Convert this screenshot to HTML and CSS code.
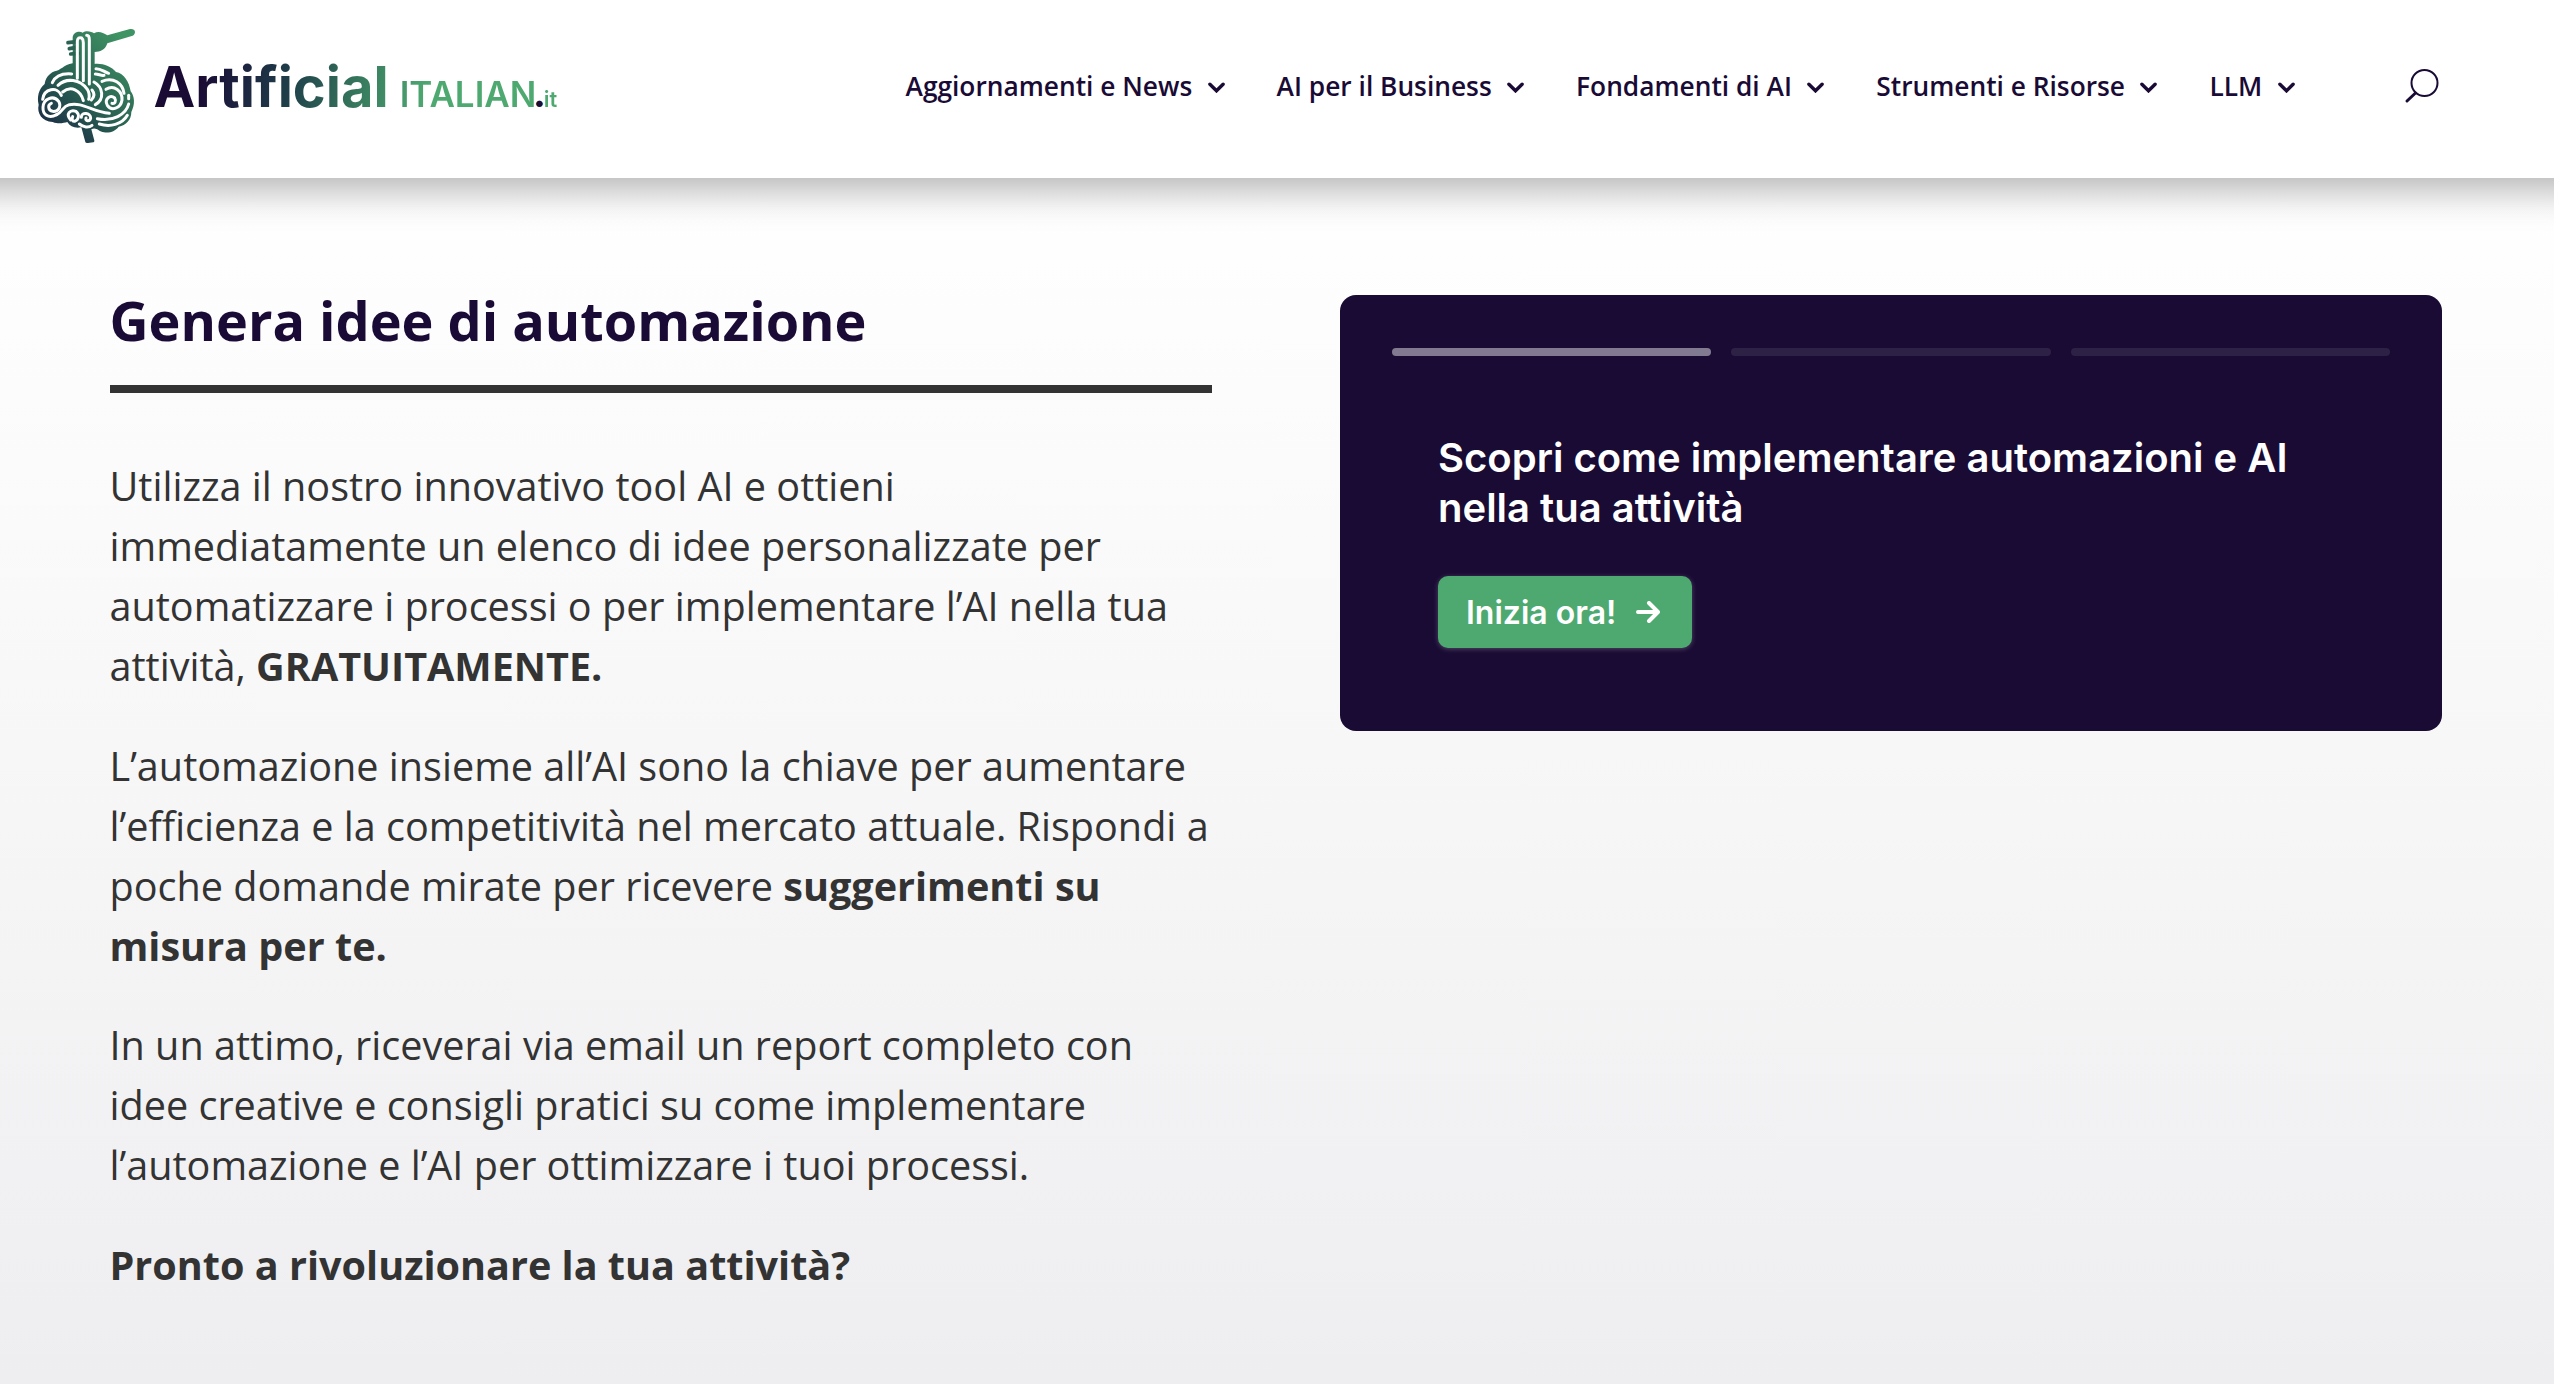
FILE: index.html
```
<!DOCTYPE html>
<html lang="it">

<head>
    <meta charset="utf-8">
    <title>Artificial Italian</title>
    <link rel="stylesheet" href="styles.css">
</head>

<body>
    <header class="header">
        <a class="logo">
            <svg class="logo-icon" viewBox="0 0 420 450">
                <defs>
                    <linearGradient id="brand" gradientUnits="userSpaceOnUse" x1="80" y1="350" x2="320" y2="90">
                        <stop offset="0" stop-color="#1b2f46" />
                        <stop offset="0.45" stop-color="#2a6353" />
                        <stop offset="1" stop-color="#3f9464" />
                    </linearGradient>
                </defs>
                <!-- brain, stem, fork -->
                <g fill="url(#brand)">
                    <path d="M158 160C130 165 122 182 104 184C84 192 76 208 74 222C56 236 50 262 56 284C50 310 66 334 98 336C118 344 132 338 142 336C150 350 166 356 184 352L196 396Q197 400 204 399L220 397Q225 396 222 388L214 358C230 350 236 366 252 367C270 370 288 362 296 350C318 346 334 330 334 306C346 284 344 258 332 244C328 216 312 190 288 186C274 168 244 158 222 162L158 160Z" />
                    <path d="M158 210L158 82C160 66 178 62 188 68C200 60 216 66 222 70C236 62 248 68 262 76L330 57C346 54 350 70 338 77L262 100C256 120 240 126 224 126L224 230L158 215Z" />
                </g>
                <g class="prongs">
                    <path d="M144 98L170 95M148 116L170 112M152 132L175 130" />
                </g>
                <!-- strands -->
                <g class="strands">
                    <path d="M172 205L172 92Q174 80 185 84Q190 88 190 98L190 212" />
                    <path d="M200 76Q208 76 208 90L208 222" />
                    <path d="M97 218C108 194 130 190 155 192" />
                    <path d="M114 226C140 202 180 208 202 238C208 248 210 256 206 268" />
                    <path d="M128 246C152 226 182 240 190 272" />
                    <path d="M68 268C72 236 112 228 124 256" />
                    <path d="M110 314C84 328 68 312 69 292C70 266 100 254 116 274C126 292 112 306 98 304C84 302 82 284 94 280" />
                    <path d="M110 314C130 304 126 290 148 284C190 276 216 306 268 310" />
                    <path d="M152 330C136 312 150 298 168 304C180 314 176 330 164 334C158 334 154 330 158 320" />
                    <path d="M184 322C184 304 212 308 212 324C210 336 194 334 198 324" />
                    <path d="M178 342C190 352 206 354 216 346" />
                    <path d="M222 216C250 232 254 268 226 284" />
                    <path d="M216 240C226 252 222 262 214 270" />
                    <path d="M228 176C244 176 252 186 266 190M226 192C236 192 244 198 252 196" />
                    <path d="M246 214C280 200 308 220 312 250" />
                    <path d="M258 238C282 222 308 244 306 270C302 296 274 304 262 286C252 268 270 252 284 264C290 274 284 282 276 280" />
                    <path d="M326 256L326 266" />
                    <path d="M326 282C318 314 278 336 232 326" />
                    <path d="M238 342C270 352 306 344 322 316" />
                </g>
            </svg>
            <span class="logo-text"><span class="logo-main">Artificial</span><span class="logo-sub">ITALIAN</span><span class="logo-dot">.</span><span class="logo-it">it</span></span>
        </a>
        <nav class="menu">
            <a>Aggiornamenti e News <svg class="chevron" viewBox="0 0 18 11"><path d="M2 2L9 9L16 2" /></svg></a>
            <a>AI per il Business <svg class="chevron" viewBox="0 0 18 11"><path d="M2 2L9 9L16 2" /></svg></a>
            <a>Fondamenti di AI <svg class="chevron" viewBox="0 0 18 11"><path d="M2 2L9 9L16 2" /></svg></a>
            <a>Strumenti e Risorse <svg class="chevron" viewBox="0 0 18 11"><path d="M2 2L9 9L16 2" /></svg></a>
            <a>LLM <svg class="chevron" viewBox="0 0 18 11"><path d="M2 2L9 9L16 2" /></svg></a>
        </nav>
        <svg class="search" viewBox="0 0 36 36">
            <circle cx="20.5" cy="15" r="13" />
            <path class="handle" d="M11.5 25L3 33" />
        </svg>
    </header>

    <main class="content">
        <section class="intro">
            <h1>Genera idee di automazione</h1>
            <hr>
            <p>Utilizza il nostro innovativo tool AI e ottieni immediatamente un elenco di idee personalizzate per automatizzare i processi o per implementare l’AI nella tua attività, <strong>GRATUITAMENTE.</strong></p>
            <p>L’automazione insieme all’AI sono la chiave per aumentare l’efficienza e la competitività nel mercato attuale. Rispondi a poche domande mirate per ricevere <strong>suggerimenti su misura per te.</strong></p>
            <p>In un attimo, riceverai via email un report completo con idee creative e consigli pratici su come implementare l’automazione e l’AI per ottimizzare i tuoi processi.</p>
            <p><strong>Pronto a rivoluzionare la tua attività?</strong></p>
        </section>
        <section class="card">
            <div class="steps">
                <span class="step active"></span>
                <span class="step"></span>
                <span class="step"></span>
            </div>
            <h2>Scopri come implementare automazioni e AI nella tua attività</h2>
            <button class="btn-start">Inizia ora!
                <svg class="arrow" viewBox="0 0 24 22"><path d="M2 11H21M13 2L22 11L13 20" /></svg>
            </button>
        </section>
    </main>
</body>

</html>
```
FILE: styles.css
```
* {
    box-sizing: border-box;
}

body {
    margin: 0;
    height: 1384px;
    overflow: hidden;
    font-family: "Open Sans", sans-serif;
    color: #333;
    background: linear-gradient(180deg, #fff 178px, #eeeef0 100%);
}

/* wider than the page so the shadow reaches both edges */
.header {
    position: relative;
    display: flex;
    height: 178px;
    margin: 0 -60px;
    padding-left: 80px;
    background-color: #fff;
    box-shadow: 0 24px 36px -12px rgba(0, 0, 0, 0.3);
}

.logo {
    display: flex;
    width: 885.5px;
}

.logo-icon {
    width: 140px;
    height: 150px;
    margin-top: 10px;
}

.prongs path {
    fill: none;
    stroke: #2a6353;
    stroke-width: 11;
    stroke-linecap: round;
}

.strands path {
    fill: none;
    stroke: #fff;
    stroke-width: 9;
    stroke-linecap: round;
}

.logo-text {
    height: 60px;
    margin: 57px 0 0 -6.5px;
    font-family: Inter, sans-serif;
    line-height: 60px;
    white-space: nowrap;
    color: transparent;
    background: linear-gradient(100deg, #1a0b35 12%, #1f3f4a 34%, #3a8060 53%, #4ea971 68%);
    -webkit-background-clip: text;
    background-clip: text;
}

.logo-main {
    font-size: 56px;
    font-weight: 700;
}

.logo-sub {
    margin-left: 11px;
    font-size: 35px;
    font-weight: 600;
}

.logo-dot {
    margin: 0 -1px 0 -3px;
    font-size: 35px;
    font-weight: 800;
    color: #190b35;
}

.logo-it {
    margin-left: -1px;
    font-size: 22px;
    font-weight: 600;
}

.menu {
    display: flex;
    gap: 52px;
    margin-top: 67px;
}

.menu a {
    display: flex;
    align-items: center;
    height: 38px;
    font-size: 26.3px;
    font-weight: 600;
    color: #190b35;
    white-space: nowrap;
}

.chevron {
    width: 17px;
    height: 11px;
    margin: 2px 0 0 15.4px;
}

.chevron path {
    fill: none;
    stroke: #190b35;
    stroke-width: 3.6;
    stroke-linecap: round;
}

.search {
    width: 36px;
    height: 36px;
    margin: 68px 0 0 109px;
    fill: none;
    stroke: #190b35;
    stroke-width: 2;
}

.search .handle {
    stroke-width: 3;
    stroke-linecap: round;
}

.content {
    display: grid;
    grid-template-columns: 1102px 1102px;
    gap: 128.5px;
    align-items: start;
    padding: 117px 0 0 109.5px;
}

h1 {
    margin: -2px 0 0;
    font-size: 54px;
    font-weight: 700;
    line-height: 54px;
    color: #190b35;
}

hr {
    height: 8px;
    margin: 38px 0 63px;
    border: 0;
    background-color: #333;
}

p {
    margin: 0 0 39.6px;
    font-size: 39.6px;
    line-height: 60px;
}

.card {
    height: 436px;
    padding: 53px 52px;
    border-radius: 16px;
    background-color: #190b33;
}

.steps {
    display: flex;
    gap: 20px;
}

.step {
    flex: 1;
    height: 8px;
    border-radius: 4px;
    background-color: rgba(255, 255, 255, 0.09);
}

.step.active {
    background-color: rgba(255, 255, 255, 0.46);
}

h2 {
    margin: 77px 46px 43px;
    font-family: Inter, sans-serif;
    font-size: 40px;
    font-weight: 600;
    line-height: 50px;
    color: #fff;
}

.btn-start {
    display: flex;
    align-items: center;
    height: 72px;
    margin-left: 46px;
    padding: 0 32px 0 28px;
    border: 0;
    border-radius: 10px;
    font-family: Inter, sans-serif;
    font-size: 32px;
    font-weight: 600;
    color: #fff;
    background-color: #4ea971;
    box-shadow: 0 1px 5px rgba(255, 255, 255, 0.25);
}

.arrow {
    width: 24px;
    height: 22px;
    margin-left: 20px;
}

.arrow path {
    fill: none;
    stroke: #fff;
    stroke-width: 4;
    stroke-linecap: round;
    stroke-linejoin: round;
}
```
